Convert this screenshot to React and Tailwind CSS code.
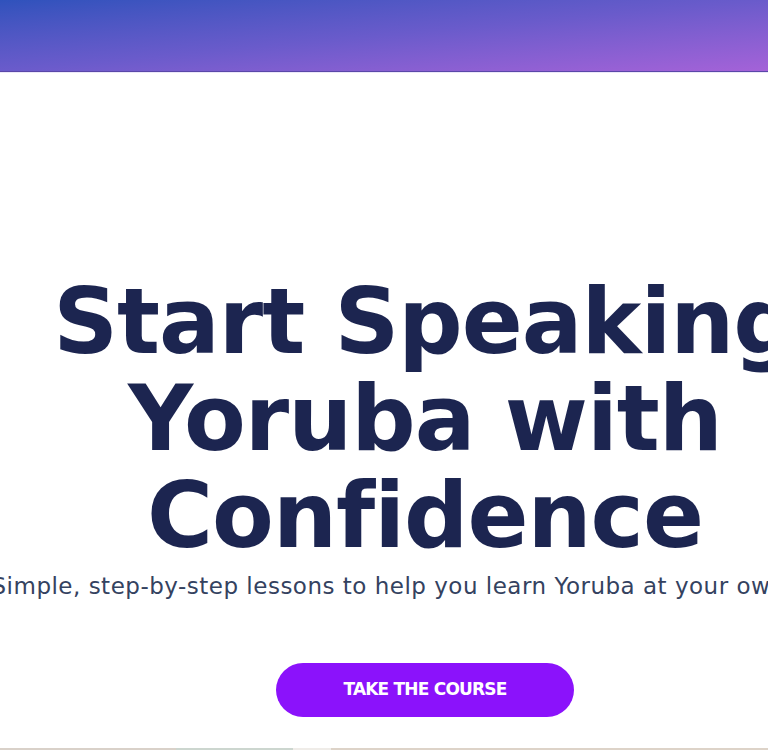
export default function App() {
  return (
    <div className="w-full h-[750px] overflow-hidden bg-white">
      <div className="w-[850px] flex flex-col">
        {/* Header bar */}
        <header className="h-[72px] w-[768px] bg-gradient-to-br from-[#2f52bc] via-[#6a5bcb] to-[#a462d8] border-b border-[#5a47a8] shadow-[0_1px_0_#ece8fa]" />

        {/* Hero */}
        <section className="flex flex-col items-center pt-[201px]">
          <h1 className="text-center font-bold text-[90px] leading-[97px] text-[#1c2550] whitespace-nowrap font-['DejaVu_Sans',sans-serif] tracking-[-1px]">
            Start Speaking
            <br />
            Yoruba with
            <br />
            Confidence
          </h1>
          <p className="mt-[6px] text-center text-[23px] leading-[32px] text-[#34425f] whitespace-nowrap font-['DejaVu_Sans',sans-serif] tracking-[0.5px]">
            Simple, step-by-step lessons to help you learn Yoruba at your own pace.
          </p>
          <button className="mt-[61px] w-[298px] h-[54px] rounded-full bg-[#8b12fb] text-white font-bold text-[17px] tracking-[-0.8px] uppercase font-['DejaVu_Sans',sans-serif]">
            Take the Course
          </button>
        </section>

        {/* Image strip peeking below */}
        <div className="mt-[31px] flex h-[10px] w-[768px]">
          <div className="w-[176px] bg-[#d9d1c9]" />
          <div className="w-[117px] bg-[#ccd6cf]" />
          <div className="w-[38px] bg-[#efece8]" />
          <div className="flex-1 bg-[#ddd3c8]" />
        </div>
      </div>
    </div>
  );
}
